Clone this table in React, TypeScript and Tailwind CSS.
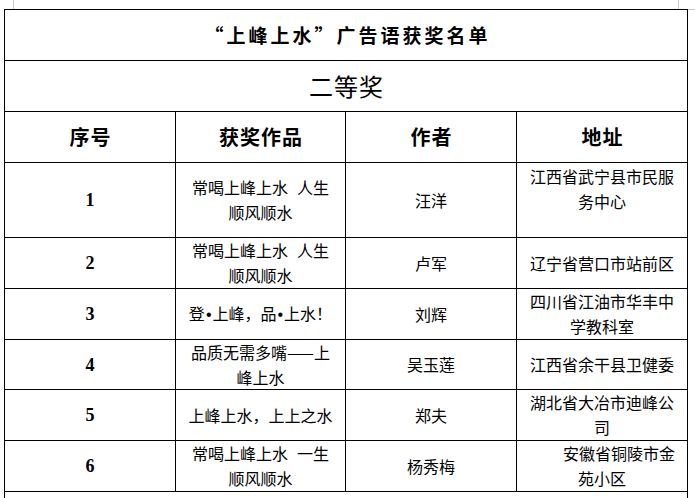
import React from 'react'

const cjk = { fontFamily: '"Noto Sans CJK SC", "Liberation Sans", sans-serif' }
const serif = { fontFamily: '"Liberation Serif", "Noto Sans CJK SC", serif' }
const latin = { fontFamily: '"Liberation Sans", sans-serif' }

interface Entry {
  no: string
  work: React.ReactNode
  author: string
  address: React.ReactNode
  height: string
  addressTop?: boolean
}

// word gap as wide as the one in the source document
const Gap = () => <span className="inline-block w-[9px]">&nbsp;</span>
const Dot = () => (
  <span className="px-[1px]" style={latin}>
    •
  </span>
)

const entries: Entry[] = [
  {
    no: '1',
    work: (
      <>
        常喝上峰上水<Gap />人生
        <br />
        顺风顺水
      </>
    ),
    author: '汪洋',
    address: (
      <>
        江西省武宁县市民服
        <br />
        务中心
      </>
    ),
    height: 'h-[75px]',
    addressTop: true
  },
  {
    no: '2',
    work: (
      <>
        常喝上峰上水<Gap />人生
        <br />
        顺风顺水
      </>
    ),
    author: '卢军',
    address: '辽宁省营口市站前区',
    height: 'h-[51px]'
  },
  {
    no: '3',
    work: (
      <>
        登<Dot />上峰，品<Dot />上水！
      </>
    ),
    author: '刘辉',
    address: (
      <>
        四川省江油市华丰中
        <br />
        学教科室
      </>
    ),
    height: 'h-[51px]'
  },
  {
    no: '4',
    work: (
      <>
        品质无需多嘴——上
        <br />
        峰上水
      </>
    ),
    author: '吴玉莲',
    address: '江西省余干县卫健委',
    height: 'h-[50px]'
  },
  {
    no: '5',
    work: '上峰上水，上上之水',
    author: '郑夫',
    address: (
      <>
        湖北省大冶市迪峰公
        <br />
        司
      </>
    ),
    height: 'h-[51px]'
  },
  {
    no: '6',
    work: (
      <>
        常喝上峰上水<Gap />一生
        <br />
        顺风顺水
      </>
    ),
    author: '杨秀梅',
    address: (
      <>
        <span className="pl-[34px]">安徽省铜陵市金</span>
        <br />
        苑小区
      </>
    ),
    height: 'h-[51px]'
  }
]

function Row({ entry }: { entry: Entry }) {
  return (
    <div className={`flex border-b border-black ${entry.height}`}>
      <div className="w-[171px] shrink-0 border-r border-black flex items-center justify-center">
        <span className="text-[18px] font-bold leading-none text-black" style={serif}>
          {entry.no}
        </span>
      </div>
      <div className="w-[170px] shrink-0 border-r border-black flex items-center justify-center">
        <div className="text-center text-[16px] leading-[25px] text-black whitespace-nowrap" style={cjk}>
          {entry.work}
        </div>
      </div>
      <div className="w-[171px] shrink-0 border-r border-black flex items-center justify-center">
        <span className="text-[16px] leading-[25px] text-black" style={cjk}>
          {entry.author}
        </span>
      </div>
      <div
        className={`w-[170px] shrink-0 flex justify-center ${
          entry.addressTop ? 'items-start pt-[1px]' : 'items-center'
        }`}
      >
        <div className="text-center text-[16px] leading-[25px] text-black" style={cjk}>
          {entry.address}
        </div>
      </div>
    </div>
  )
}

export default function App() {
  return (
    <div className="relative w-[695px] h-[498px] overflow-hidden bg-white">
      {/* page corner marks */}
      <div className="absolute left-[13px] top-0 w-px h-[9px] bg-[#c8c8c8]" />
      <div className="absolute left-[678px] top-0 w-px h-[9px] bg-[#c8c8c8]" />
      <div className="absolute left-[688px] top-[9px] w-[7px] h-px bg-[#c8c8c8]" />

      <div className="ml-[4px] mt-[9px] w-[684px] border border-b-0 border-black">
        {/* title */}
        <div className="h-[51px] border-b border-black flex items-center justify-center">
          <span className="text-[19px] font-bold tracking-[3px] text-black pl-[3px]" style={cjk}>
            “上峰上水”广告语获奖名单
          </span>
        </div>

        {/* prize level */}
        <div className="h-[51px] border-b border-black flex items-center justify-center">
          <span className="text-[24px] tracking-[1px] text-black pl-[1px]" style={cjk}>
            二等奖
          </span>
        </div>

        {/* header */}
        <div className="flex h-[51px] border-b border-black">
          {['序号', '获奖作品', '作者', '地址'].map((h, i) => (
            <div
              key={h}
              className={`shrink-0 flex items-center justify-center ${
                i === 0 ? 'w-[171px]' : i === 1 ? 'w-[170px]' : i === 2 ? 'w-[171px]' : 'w-[170px]'
              } ${i < 3 ? 'border-r border-black' : ''}`}
            >
              <span className="text-[20px] font-bold tracking-[1px] pl-[1px] text-black" style={cjk}>
                {h}
              </span>
            </div>
          ))}
        </div>

        {entries.map((entry) => (
          <Row key={entry.no} entry={entry} />
        ))}

        {/* next row, cut off by the page edge */}
        <div className="h-[20px]" />
      </div>
    </div>
  )
}
